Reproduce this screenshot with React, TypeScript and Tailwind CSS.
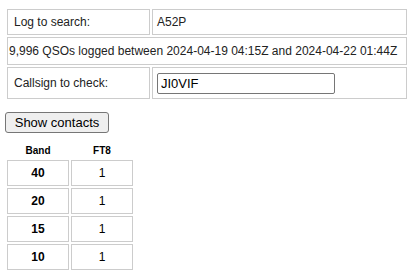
import React from "react";

const font = { fontFamily: '"Liberation Sans", Arial, sans-serif' };

export default function App() {
  const rows = [
    ["40", "1"],
    ["20", "1"],
    ["15", "1"],
    ["10", "1"],
  ];
  return (
    <div className="bg-white text-[12px] leading-[16px] text-[#222] p-[5px] w-[415px] h-[272px]" style={font}>
      <table className="border-separate border-spacing-[2px] table-fixed w-[404px] mt-[2px]">
        <colgroup>
          <col className="w-[143px]" />
          <col className="w-[255px]" />
        </colgroup>
        <tbody>
          <tr>
            <td className="border border-[#cccccc] h-[26px] pl-[6px] align-middle">Log to search:</td>
            <td className="border border-[#cccccc] h-[26px] pl-[4px] align-middle">A52P</td>
          </tr>
          <tr>
            <td colSpan={2} className="border border-[#cccccc] h-[28px] pl-[1px] align-middle whitespace-nowrap">
              9,996 QSOs logged between 2024-04-19 04:15Z and 2024-04-22 01:44Z
            </td>
          </tr>
          <tr>
            <td className="border border-[#cccccc] h-[32px] pl-[6px] align-middle">Callsign to check:</td>
            <td className="border border-[#cccccc] h-[32px] pl-[4px] py-0 align-middle">
              <div className="flex items-center">
                <input
                  defaultValue="JI0VIF"
                  className="w-[178px] h-[21px] border border-[#767676] rounded-[2px] px-[3px] text-[13px] text-black outline-none"
                  style={font}
                />
              </div>
            </td>
          </tr>
        </tbody>
      </table>
      <div className="flex mt-[11px]">
        <button
          className="h-[21px] w-[104px] border border-[#767676] rounded-[3px] bg-[#efefef] text-[13px] text-black leading-none"
          style={font}
        >
          Show contacts
        </button>
      </div>
      <table className="border-separate border-spacing-[2px] table-fixed w-[130px] mt-[9px]">
        <colgroup>
          <col className="w-[62px]" />
          <col className="w-[62px]" />
        </colgroup>
        <thead>
          <tr>
            <th className="text-[10px] font-bold h-[14px] leading-none text-center text-black">Band</th>
            <th className="text-[10px] font-bold h-[14px] leading-none text-center text-black">FT8</th>
          </tr>
        </thead>
        <tbody>
          {rows.map(([b, v]) => (
            <tr key={b}>
              <td className="border border-[#cccccc] h-[26px] text-center font-bold text-[12px] text-black">{b}</td>
              <td className="border border-[#cccccc] h-[26px] text-center text-[12px] text-black">{v}</td>
            </tr>
          ))}
        </tbody>
      </table>
    </div>
  );
}
